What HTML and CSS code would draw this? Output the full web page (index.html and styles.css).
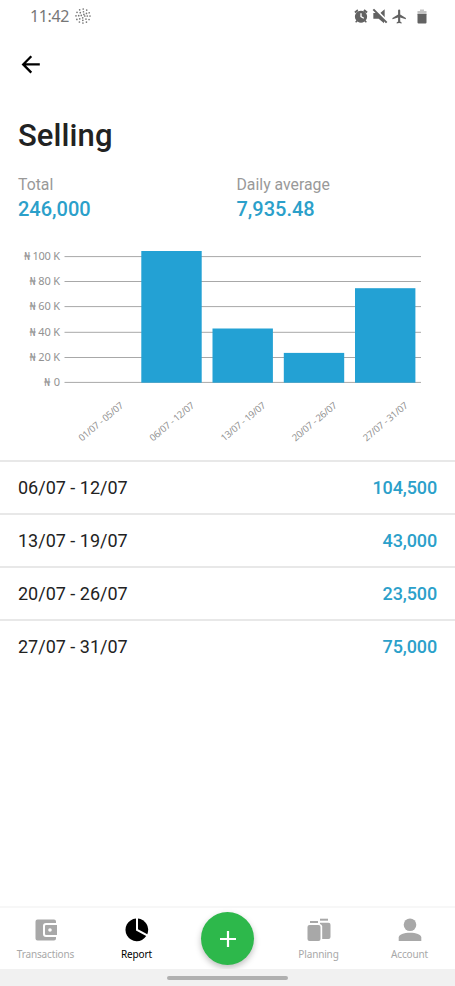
FILE: index.html
```html
<!DOCTYPE html>
<html lang="en">
<head>
  <meta charset="UTF-8" />
  <meta name="viewport" content="width=device-width, initial-scale=1" />
  <title>Selling</title>
  <link rel="stylesheet" href="styles.css">
</head>
<body>
  <div class="status-bar">
    <span class="clock">11:42</span>
    <svg class="dots" width="16" height="16" viewBox="0 0 16 16" fill="none" stroke="#777" stroke-width="1.7" stroke-linecap="round">
      <circle cx="8" cy="8" r="7" stroke-dasharray="0 3.665" />
      <circle cx="8" cy="8" r="4.3" stroke-dasharray="0 3.377" />
      <circle cx="8" cy="8" r="1.8" stroke-dasharray="0 2.827" />
    </svg>
    <div class="status-icons">
      <svg width="16" height="16" viewBox="0 0 24 24" fill="#626262">
        <path d="M22 5.700l-4.600-3.900-1.900 2.300L20.100 8zM7.900 4.100L6.600 1.800 2 5.700 3.900 8zM12 4a9 9 0 0 0-7 14.700l-1.800 2 1.500 1.500 2-1.900a9 9 0 0 0 10.600 0l2 1.900 1.500-1.500-1.800-2A9 9 0 0 0 12 4zm3.700 12.300L11 13.500V8h2v4.500l3.700 2.200z" />
      </svg>
      <svg width="16" height="16" viewBox="0 0 24 24" fill="#626262">
        <path d="M2 7.500h5L18 18v5l-8-7H2zM12 8l7-6v13z" />
        <path d="M4 0l20 20" stroke="#fff" stroke-width="2" />
        <path d="M2 2l20 20" stroke="#626262" stroke-width="3" />
      </svg>
      <svg width="17" height="17" viewBox="0 0 24 24" fill="#626262">
        <path d="M21 16v-2l-8-5V3.500a1.500 1.500 0 0 0-3 0V9l-8 5v2l8-2.500V19l-2 1.500V22l3.500-1 3.500 1v-1.500L13 19v-5.500z" />
      </svg>
      <svg class="battery" width="10" height="15" viewBox="0 0 10 15">
        <path d="M3 .5h4V2h2.500v4h-9V2H3z" fill="#c4c4c4" />
        <path d="M.5 5h9v8.500a1 1 0 0 1-1 1h-7a1 1 0 0 1-1-1z" fill="#626262" />
      </svg>
    </div>
  </div>

  <header class="toolbar">
    <svg width="20" height="20" viewBox="0 0 20 20" fill="none" stroke="#000" stroke-width="2.3">
      <path d="M18.800 10.400H3M10.300 2.200L2.200 10.400l8.100 8.200" />
    </svg>
  </header>

  <h1>Selling</h1>

  <section class="summary">
    <div class="summary-item">
      <div class="summary-label">Total</div>
      <div class="summary-value">246,000</div>
    </div>
    <div class="summary-item">
      <div class="summary-label">Daily average</div>
      <div class="summary-value">7,935.48</div>
    </div>
  </section>

  <svg class="chart" width="455" height="225" viewBox="0 235 455 225">
    <g class="grid">
      <path d="M64.500 256.600H421M64.500 281.500H421M64.500 306.600H421M64.500 332.300H421M64.500 357.500H421M64.500 382.400H421" />
    </g>
    <g class="bars">
      <rect x="141.300" y="251" width="60.400" height="131.700" />
      <rect x="212.500" y="328.500" width="60.400" height="54.200" />
      <rect x="283.800" y="352.900" width="60.400" height="29.800" />
      <rect x="355" y="288.200" width="60.400" height="94.500" />
    </g>
    <g class="y-labels">
      <text x="24" y="260" textLength="36">₦ 100 K</text>
      <text x="29.500" y="285.200" textLength="30.500">₦ 80 K</text>
      <text x="29.500" y="310.400" textLength="30.500">₦ 60 K</text>
      <text x="29.500" y="335.700" textLength="30.500">₦ 40 K</text>
      <text x="29.500" y="361" textLength="30.500">₦ 20 K</text>
      <text x="44" y="385.800" textLength="16">₦ 0</text>
    </g>
    <g class="x-labels">
      <text transform="translate(82 441.800) rotate(-40)" textLength="55">01/07 - 05/07</text>
      <text transform="translate(153 441.800) rotate(-40)" textLength="55">06/07 - 12/07</text>
      <text transform="translate(224.200 441.800) rotate(-40)" textLength="55">13/07 - 19/07</text>
      <text transform="translate(295.500 441.800) rotate(-40)" textLength="55">20/07 - 26/07</text>
      <text transform="translate(366.500 441.800) rotate(-40)" textLength="55">27/07 - 31/07</text>
    </g>
  </svg>

  <ul class="periods">
    <li><span>06/07 - 12/07</span><span class="amount">104,500</span></li>
    <li><span>13/07 - 19/07</span><span class="amount">43,000</span></li>
    <li><span>20/07 - 26/07</span><span class="amount">23,500</span></li>
    <li><span>27/07 - 31/07</span><span class="amount">75,000</span></li>
  </ul>

  <nav class="tabs">
    <a class="tab">
      <svg width="24" height="24" viewBox="0 0 24 24">
        <path d="M3.500 1.500h16.500a2 2 0 0 1 2 2V5H12a3 3 0 0 0-3 3v8a3 3 0 0 0 3 3h10v1.500a2 2 0 0 1-2 2H3.500a2 2 0 0 1-2-2v-17a2 2 0 0 1 2-2z" />
        <path fill-rule="evenodd" d="M12 7h11v10H12a1 1 0 0 1-1-1V8a1 1 0 0 1 1-1zM16 10.200a1.800 1.800 0 1 0 0 3.600a1.800 1.800 0 0 0 0-3.600z" />
      </svg>
      <span>Transactions</span>
    </a>
    <a class="tab active">
      <svg width="24" height="24" viewBox="0 0 24 24">
        <path d="M11 .6v12l10.200 5.500A11.300 11.300 0 1 1 11 .6z" />
        <path d="M13 .6A11.300 11.300 0 0 1 22.300 16.200L13 11.300z" />
      </svg>
      <span>Report</span>
    </a>
    <a class="add-button">
      <svg width="16" height="16" viewBox="0 0 16 16"><path d="M8 0v16M0 8h16" stroke="#fff" stroke-width="2.200" /></svg>
    </a>
    <a class="tab">
      <svg width="24" height="24" viewBox="0 0 24 24">
        <rect x="0.500" y="7" width="13" height="16" rx="2" />
        <rect x="3" y="3" width="8" height="2" />
        <rect x="13" y="0.700" width="8" height="2" />
        <path d="M13 4.800h8.500a2 2 0 0 1 2 2v12.200a2 2 0 0 1-2 2H15.200V8a3 3 0 0 0-2.200-2z" />
      </svg>
      <span>Planning</span>
    </a>
    <a class="tab">
      <svg width="24" height="24" viewBox="0 0 24 24">
        <circle cx="12" cy="6.700" r="6.300" />
        <path d="M.7 23v-3.500C.7 16.500 6 14.700 12 14.700s11.300 1.800 11.300 4.800V23z" />
      </svg>
      <span>Account</span>
    </a>
  </nav>

  <div class="gesture-bar"><div class="gesture-handle"></div></div>
</body>
</html>
```
FILE: styles.css
```css
* {
  box-sizing: border-box;
}

body {
  margin: 0;
  height: 986px;
  display: flex;
  flex-direction: column;
  background: #fff;
  color: #222;
  font-family: Roboto, sans-serif;
  overflow: hidden;
}

svg {
  display: block;
  flex: none;
}

.status-bar {
  height: 32px;
  padding: 0 28px 0 30px;
  display: flex;
  align-items: center;
}

.clock {
  width: 40px;
  margin-right: 5px;
  font-family: "Noto Sans", sans-serif;
  font-size: 16px;
  letter-spacing: -0.4px;
  color: #777;
}

.status-icons {
  display: flex;
  align-items: center;
  gap: 3px;
  margin-left: auto;
}

.battery {
  margin-left: 6px;
}

.toolbar {
  height: 64px;
  padding: 22px 21px;
}

h1 {
  margin: 22px 18px 0;
  font-size: 31px;
  line-height: 36px;
  font-weight: 500;
  letter-spacing: 0.1px;
}

.summary {
  display: grid;
  grid-template-columns: 1fr 1fr;
  padding: 21px 0 0 18px;
  height: 81px;
}

.summary-label {
  font-size: 15.8px;
  line-height: 20px;
  color: #999;
}

.summary-value {
  margin-top: 2px;
  font-size: 20px;
  line-height: 24px;
  font-weight: 500;
  color: #2ba0ca;
}

.grid path {
  stroke: #a8a8a8;
  stroke-width: 1;
}

.bars {
  fill: #23a1d4;
}

.y-labels,
.x-labels {
  font-family: "Noto Sans", sans-serif;
  font-size: 11px;
  fill: #929292;
}

.x-labels {
  font-size: 9.5px;
}

.periods {
  margin: 0;
  padding: 0;
  list-style: none;
}

.periods li {
  height: 53px;
  padding: 0 18px;
  display: flex;
  align-items: center;
  justify-content: space-between;
  border-top: 2px solid #e8e8e8;
  font-size: 18px;
}

.amount {
  font-weight: 500;
  letter-spacing: -0.12px;
  color: #2ba0ca;
}

.tabs {
  height: 63px;
  margin-top: auto;
  display: grid;
  grid-template-columns: repeat(5, 1fr);
  border-top: 2px solid #f7f7f7;
}

.tab {
  display: flex;
  flex-direction: column;
  align-items: center;
  padding-top: 10px;
  color: #a8a8a8;
  fill: currentColor;
  font-family: "Noto Sans", sans-serif;
  font-size: 10px;
  letter-spacing: -0.15px;
  line-height: 14px;
}

.tab span {
  margin-top: 5px;
}

.tab.active {
  color: #000;
}

.add-button {
  width: 53px;
  height: 53px;
  margin-top: 4px;
  justify-self: center;
  display: flex;
  align-items: center;
  justify-content: center;
  border-radius: 50%;
  background: #2db84b;
  box-shadow: 0 3px 6px rgba(0, 0, 0, 0.25);
}

.gesture-bar {
  height: 17px;
  padding-top: 7px;
  background: #f1f1f1;
}

.gesture-handle {
  width: 121px;
  height: 4px;
  margin: 0 auto;
  border-radius: 2px;
  background: #b0b0b0;
}
```
